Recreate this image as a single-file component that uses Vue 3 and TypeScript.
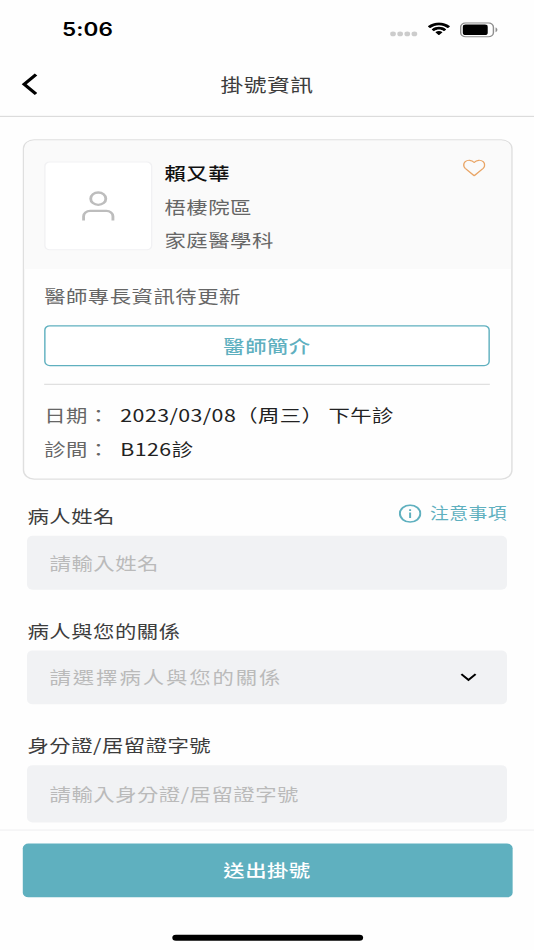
<script setup lang="ts">
import { ref } from 'vue'

interface Row {
  label: string
  value: string
}

const rows: Row[] = [
  { label: '日期：', value: '2023/03/08（周三） 下午診' },
  { label: '診間：', value: 'B126診' },
]

const patientName = ref<string>('')
const idNumber = ref<string>('')
</script>

<template>
  <div class="viewport">
    <div class="screen">
      <div class="status">
        <span class="time">5:06</span>
        <div class="indicators">
          <div class="dots"><i v-for="n in 4" :key="n"></i></div>
          <svg class="wifi" viewBox="0 0 17 12">
            <path d="M8.5 2.4c2.3 0 4.5.9 6.2 2.5.1.1.3.1.4 0l1.2-1.2c.1-.1.1-.4 0-.5C12-1 5-1 .7 3.200c-.1.1-.1.400 0 .5l1.200 1.200c.1.1.3.1.4 0C4 3.300 6.200 2.400 8.500 2.400z" />
            <path d="M8.500 6.300c1.300 0 2.500.5 3.400 1.300.1.1.3.1.5 0l1.200-1.200c.1-.1.1-.4 0-.5-2.900-2.700-7.300-2.700-10.200 0-.1.1-.1.400 0 .5l1.200 1.200c.1.1.300.1.5 0 .900-.8 2.100-1.300 3.400-1.300z" />
            <path d="M10.900 8.900c.1-.1.1-.300 0-.4-1.400-1.200-3.400-1.200-4.800 0-.1.1-.1.300 0 .4l2.100 2.100c.1.1.400.1.5 0z" />
          </svg>
          <svg class="battery" viewBox="0 0 27 13">
            <rect x="0.5" y="0.5" width="23" height="12" rx="3.600" fill="none" stroke="#8e8e8e" />
            <rect x="2" y="2" width="17.500" height="9" rx="2" />
            <path d="M25 4.500v4c.8-.3 1.300-1.100 1.300-2s-.5-1.700-1.300-2z" fill="#8e8e8e" />
          </svg>
        </div>
      </div>

      <header class="nav">
        <svg class="back" viewBox="0 0 12 20"><path d="M10.300 1.700 2 10l8.300 8.300" /></svg>
        <h1>掛號資訊</h1>
      </header>

      <main class="content">
        <section class="card">
          <div class="doctor">
            <div class="photo">
              <svg viewBox="0 0 24 26">
                <circle cx="12" cy="6.800" r="5.300" />
                <path d="M1.700 25.500v-3.600a4.600 4.600 0 0 1 4.600-4.600h11.400a4.600 4.600 0 0 1 4.600 4.600v3.600" />
              </svg>
            </div>
            <div class="info">
              <strong>賴又華</strong>
              <span>梧棲院區</span>
              <span>家庭醫學科</span>
            </div>
            <svg class="heart" viewBox="0 0 16 15">
              <path d="M8 14.200 1.700 7.900C.3 6.400.3 3.700 1.700 2.200 3.400.500 6.200.500 8 2.900 9.800.500 12.600.500 14.300 2.200c1.400 1.500 1.400 4.200 0 5.700z" />
            </svg>
          </div>
          <div class="details">
            <p class="desc">醫師專長資訊待更新</p>
            <button class="outline" type="button">醫師簡介</button>
            <dl>
              <div v-for="row in rows" :key="row.label" class="row">
                <dt>{{ row.label }}</dt>
                <dd>{{ row.value }}</dd>
              </div>
            </dl>
          </div>
        </section>

        <form class="form" @submit.prevent>
          <div class="group">
            <div class="caption">
              <label for="name">病人姓名</label>
              <span class="notice">
                <svg viewBox="0 0 16 16">
                  <circle cx="8" cy="8" r="7.200" />
                  <path d="M8 7v4.700M8 4.200v1.600" />
                </svg>
                注意事項
              </span>
            </div>
            <input id="name" v-model="patientName" class="field" placeholder="請輸入姓名" />
          </div>
          <div class="group">
            <div class="caption"><label>病人與您的關係</label></div>
            <div class="field select">
              <span>請選擇病人與您的關係</span>
              <svg viewBox="0 0 12 8"><path d="M1 1.200 6 6.200l5-5" /></svg>
            </div>
          </div>
          <div class="group">
            <div class="caption"><label for="idno">身分證/居留證字號</label></div>
            <input id="idno" v-model="idNumber" class="field tall" placeholder="請輸入身分證/居留證字號" />
          </div>
        </form>
      </main>

      <footer class="footer">
        <button class="submit" type="button">送出掛號</button>
        <div class="home"></div>
      </footer>
    </div>
  </div>
</template>

<style>
body {
  margin: 0;
  background: #fff;
}
</style>

<style scoped>
* {
  box-sizing: border-box;
}
.viewport {
  width: 534px;
  height: 950px;
  overflow: hidden;
}
/* 375x812 layout stretched to fill the viewport */
.screen {
  width: 375px;
  height: 812px;
  transform: scale(1.424, 1.16995);
  transform-origin: 0 0;
  display: flex;
  flex-direction: column;
  background: #fefefe;
  color: #3c3c3c;
  font-family: 'Noto Sans CJK TC', sans-serif;
  font-size: 15px;
  letter-spacing: 0.35px;
}
svg {
  display: block;
  flex: none;
}
button,
input {
  font: inherit;
  letter-spacing: inherit;
}
.status {
  height: 44px;
  flex: none;
  display: flex;
  justify-content: space-between;
  padding: 15px 25px 0 43.5px;
}
.time {
  padding-top: 0.900px;
  font: 600 15.800px/20px Inter, sans-serif;
  letter-spacing: 0.1px;
  color: #000;
}
.indicators {
  display: flex;
  align-items: center;
  height: 20px;
}
.dots {
  display: flex;
  gap: 1.100px;
  margin: 8px 6.500px 0 0;
}
.dots i {
  width: 4px;
  height: 4px;
  border-radius: 50%;
  background: #ccc;
}
.wifi {
  width: 16.500px;
  height: 12px;
  margin-right: 7px;
}
.battery {
  width: 27px;
  height: 13px;
}
.nav {
  position: relative;
  height: 56px;
  flex: none;
  border-bottom: 1.200px solid #dcdcdc;
  display: flex;
  align-items: center;
  justify-content: center;
}
.nav h1 {
  margin: 0;
  font-size: 16px;
  font-weight: 400;
  line-height: 24px;
}
.back {
  position: absolute;
  left: 15px;
  top: 18px;
  width: 12px;
  height: 20px;
  fill: none;
  stroke: #000;
  stroke-width: 2.500;
}
.content {
  flex: 1;
  min-height: 0;
  overflow: hidden;
}
.card {
  margin: 18.500px 15.500px 0;
  height: 291.500px;
  border: 1px solid #dfdfdf;
  border-radius: 8px;
  overflow: hidden;
}
.doctor {
  height: 110px;
  padding: 18px 14.500px 0;
  background: #fafafa;
  display: flex;
  align-items: flex-start;
}
.photo {
  width: 76px;
  height: 76px;
  border: 1px solid #f1f1f3;
  border-radius: 4px;
  background: #fff;
  display: flex;
  align-items: center;
  justify-content: center;
}
.photo svg {
  width: 24px;
  height: 26px;
  fill: none;
  stroke: #bdbdbd;
  stroke-width: 2;
}
.info {
  flex: 1;
  margin: -3.200px 0 0 8.500px;
  display: flex;
  flex-direction: column;
  line-height: 28.400px;
  color: #666;
}
.info strong {
  font-weight: 500;
  color: #111;
}
.heart {
  width: 16px;
  height: 15px;
  margin: -2px 3.500px 0 0;
  fill: none;
  stroke: #e9a566;
  stroke-width: 1;
  stroke-linejoin: round;
}
.details {
  padding: 12.400px 14.500px 0;
}
.desc {
  margin: 0;
  line-height: 22px;
  color: #666;
}
.outline {
  display: block;
  width: 100%;
  height: 35px;
  margin: 14.400px 0 15px;
  padding: 0 0 1.200px;
  border: 1px solid #5fb0bf;
  border-radius: 4px;
  background: #fff;
  color: #5fb0bf;
  font-weight: 500;
}
dl {
  margin: 0;
  padding-top: 12.200px;
  border-top: 1px solid #dedede;
}
.row {
  display: flex;
  line-height: 28.800px;
}
dt {
  width: 53.500px;
  color: #666;
}
dd {
  margin: 0;
  color: #222;
  letter-spacing: 0.300px;
  white-space: pre;
}
.form {
  padding: 18.800px 19.300px 0;
}
.group {
  height: 98.200px;
}
.caption {
  height: 29px;
  line-height: 23px;
  display: flex;
  justify-content: space-between;
}
.notice {
  display: flex;
  align-items: center;
  height: 21px;
  line-height: 22px;
  gap: 6px;
  font-size: 13.200px;
  letter-spacing: 0.300px;
  color: #5fb0bf;
  margin-right: -0.300px;
}
.notice svg {
  width: 16px;
  height: 16px;
  fill: none;
  stroke: #5fb0bf;
  stroke-width: 1.400;
}
.field {
  display: flex;
  align-items: center;
  width: 100%;
  height: 46px;
  padding: 0 21px 0 15.500px;
  border: 0;
  border-radius: 4px;
  background: #f1f2f4;
  color: #bababa;
  outline: 0;
}
.field::placeholder {
  color: #bababa;
  opacity: 1;
}
.tall {
  height: 49px;
}
.select {
  justify-content: space-between;
  letter-spacing: 1.350px;
}
.select svg {
  width: 12px;
  height: 8px;
  margin-top: 1px;
  fill: none;
  stroke: #000;
  stroke-width: 1.500;
}
.footer {
  height: 103.500px;
  flex: none;
  border-top: 1.500px solid #f0f0f2;
  padding: 11.600px 15.500px 0;
  background: #fefefe;
}
.submit {
  display: block;
  width: 100%;
  height: 46px;
  padding: 0 0 0.500px;
  border: 0;
  border-radius: 4px;
  background: #5fb0bf;
  color: #fff;
  font-weight: 500;
}
.home {
  width: 134px;
  height: 5px;
  margin: 31.500px auto 0;
  border-radius: 3px;
  background: #000;
}
</style>
